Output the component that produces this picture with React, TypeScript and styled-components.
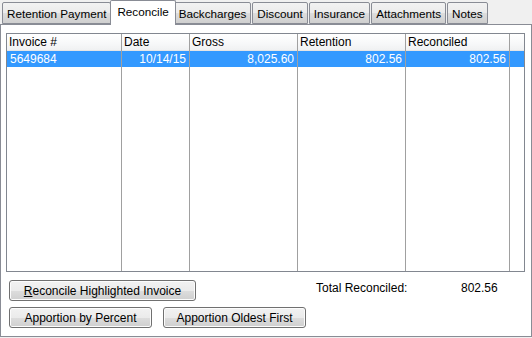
import React from "react";
import styled, { createGlobalStyle } from "styled-components";

const GlobalStyle = createGlobalStyle`
  html, body {
    margin: 0;
    padding: 0;
    background: #f0f0f0;
  }
  body {
    font-family: "Liberation Sans", Arial, sans-serif;
    font-size: 12px;
    color: #000;
  }
`;

const Window = styled.div`
  width: 532px;
  height: 338px;
  display: flex;
  flex-direction: column;
  background: #f0f0f0;
`;

const TabStrip = styled.div`
  display: flex;
  align-items: flex-end;
  height: 24px;
  padding-left: 2px;
  position: relative;
  z-index: 1;
`;

const Tab = styled.div<{ $active?: boolean }>`
  box-sizing: border-box;
  height: ${p => (p.$active ? "25px" : "22px")};
  margin: ${p => (p.$active ? "0 -2px -1px -2px" : "0 1px 0 0")};
  padding: ${p => (p.$active ? "3px 6px 0 6px" : "3px 4px 0 4px")};
  border: 1px solid #898c95;
  border-bottom: ${p => (p.$active ? "none" : "1px solid #898c95")};
  border-radius: 2px 2px 0 0;
  background: ${p =>
    p.$active
      ? "#ffffff"
      : "linear-gradient(to bottom, #f2f2f2 0%, #ebebeb 50%, #dddddd 51%, #cfcfcf 100%)"};
  font-size: 11.7px;
  white-space: nowrap;
  line-height: 15px;
  position: relative;
  z-index: ${p => (p.$active ? 2 : 1)};
`;

const Panel = styled.div`
  box-sizing: border-box;
  height: 313px;
  width: 532px;
  border: 1px solid #898c95;
  background: #ffffff;
  padding: 8px 6px 0 5px;
  display: flex;
  flex-direction: column;
`;

const Grid = styled.div`
  box-sizing: border-box;
  height: 239px;
  width: 519px;
  border: 1px solid #828790;
  display: flex;
`;

const Column = styled.div<{ $width: number }>`
  box-sizing: border-box;
  width: ${p => p.$width}px;
  flex: none;
  border-right: 1px solid #a0a0a0;
  display: flex;
  flex-direction: column;
  &:last-child {
    border-right: none;
  }
`;

const HeaderCell = styled.div`
  height: 16px;
  line-height: 16px;
  padding-left: 2px;
  background: linear-gradient(to bottom, #ffffff 0%, #f7f8f9 60%, #f0f1f2 100%);
  border-bottom: 1px solid #e5e5e5;
  white-space: nowrap;
  overflow: hidden;
`;

const DataCell = styled.div<{ $align: "left" | "right" }>`
  height: 16px;
  line-height: 16px;
  background: #3399ff;
  color: #ffffff;
  text-align: ${p => p.$align};
  padding: 0 3px 0 3px;
  white-space: nowrap;
`;

const Footer = styled.div`
  display: grid;
  grid-template-columns: 154px 154px 1fr;
  grid-template-rows: 21px 21px;
  row-gap: 6px;
  padding: 8px 0 0 3px;
  align-items: center;
`;

const Button = styled.button<{ $span?: number }>`
  box-sizing: border-box;
  height: 21px;
  grid-column: span ${p => p.$span ?? 1};
  justify-self: start;
  font-family: "Liberation Sans", Arial, sans-serif;
  font-size: 12px;
  color: #000;
  border: 1px solid #707070;
  border-radius: 3px;
  padding: 0 6px;
  background: linear-gradient(to bottom, #f2f2f2 0%, #ebebeb 50%, #dddddd 51%, #cfcfcf 100%);
  box-shadow: inset 0 0 0 1px #fcfcfc;
  white-space: nowrap;
`;

const WideButton = styled(Button)`
  width: 187px;
`;

const HalfButton = styled(Button)`
  width: 143px;
`;

const TotalBox = styled.div`
  display: flex;
  align-self: start;
  padding-top: 1px;
  margin-left: -1px;
`;

const TotalLabel = styled.span`
  width: 145px;
`;

const TotalValue = styled.span`
  width: 34px;
  text-align: right;
`;

const Key = styled.u`
  text-decoration: underline;
`;

const tabs = [
  "Retention Payment",
  "Reconcile",
  "Backcharges",
  "Discount",
  "Insurance",
  "Attachments",
  "Notes",
];

const columns: { title: string; width: number; value: string; align: "left" | "right" }[] = [
  { title: "Invoice #", width: 115, value: "5649684", align: "left" },
  { title: "Date", width: 68, value: "10/14/15", align: "right" },
  { title: "Gross", width: 108, value: "8,025.60", align: "right" },
  { title: "Retention", width: 108, value: "802.56", align: "right" },
  { title: "Reconciled", width: 104, value: "802.56", align: "right" },
  { title: "", width: 14, value: "", align: "right" },
];

const App: React.FC = () => {
  return (
    <Window>
      <GlobalStyle />
      <TabStrip>
        {tabs.map(t => (
          <Tab key={t} $active={t === "Reconcile"}>
            {t}
          </Tab>
        ))}
      </TabStrip>
      <Panel>
        <Grid>
          {columns.map((c, i) => (
            <Column key={i} $width={c.width}>
              <HeaderCell>{c.title}</HeaderCell>
              <DataCell $align={c.align}>{c.value}</DataCell>
            </Column>
          ))}
        </Grid>
        <Footer>
          <WideButton $span={2}>
            <Key>R</Key>econcile Highlighted Invoice
          </WideButton>
          <TotalBox>
            <TotalLabel>Total Reconciled:</TotalLabel>
            <TotalValue>802.56</TotalValue>
          </TotalBox>
          <HalfButton>Apportion by Percent</HalfButton>
          <HalfButton>Apportion Oldest First</HalfButton>
        </Footer>
      </Panel>
    </Window>
  );
};

export default App;
